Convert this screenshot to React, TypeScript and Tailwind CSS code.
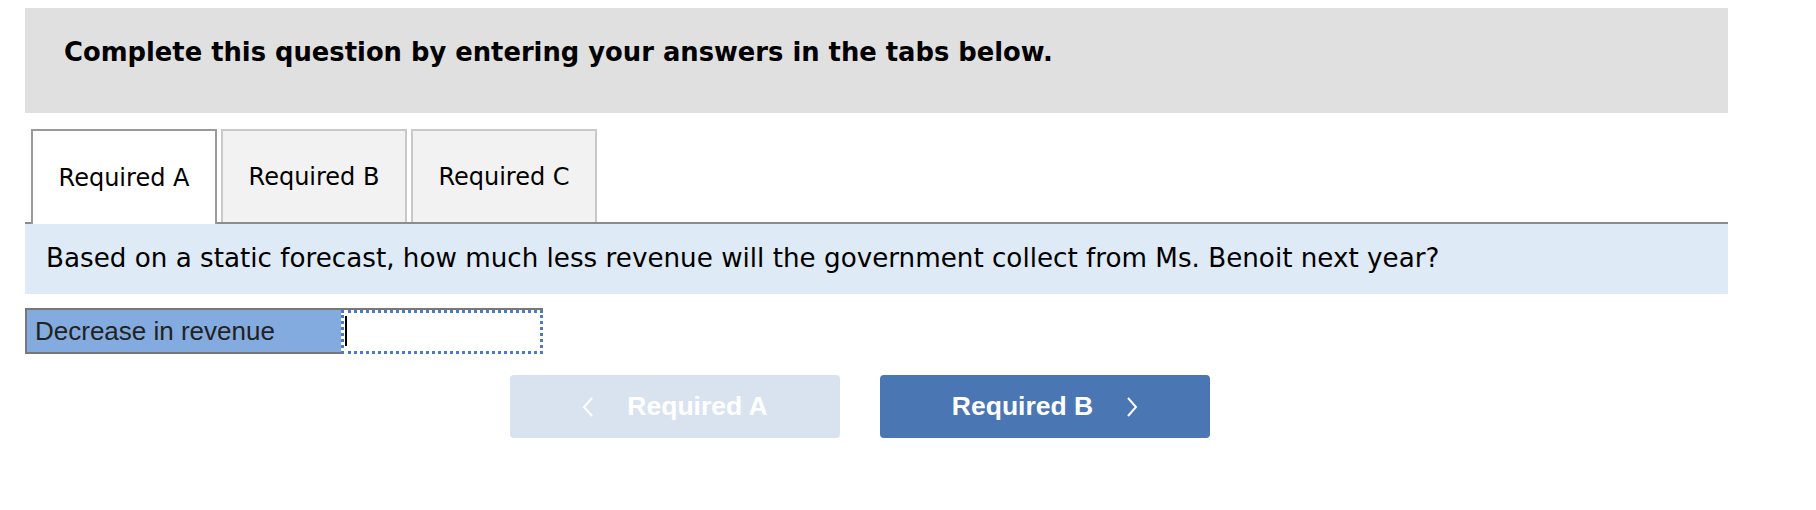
import React from 'react';

const tabs = ['Required A', 'Required B', 'Required C'];

const Chevron = ({ dir }: { dir: 'left' | 'right' }) => (
  <svg width="12" height="22" viewBox="0 0 12 22" fill="none" className="shrink-0">
    <polyline
      points={dir === 'left' ? '10,2 2,11 10,20' : '2,2 10,11 2,20'}
      stroke="white"
      strokeWidth="2"
    />
  </svg>
);

export default function App() {
  return (
    <div className="w-[1816px] h-[510px] bg-white pt-[8px] pl-[25px]">
      <div className="w-[1703px]">
        {/* Instructions */}
        <div className="h-[105px] bg-[#e0e0e0] pl-[39px] pt-[29px]">
          <p className="font-['DejaVu_Sans',Verdana,sans-serif] font-bold text-[25.8px] leading-[30px] text-black">
            Complete this question by entering your answers in the tabs below.
          </p>
        </div>

        {/* Tabs */}
        <div className="mt-[14px] h-[97px] flex items-end gap-[4px] pl-[6px] border-b-2 border-[#8c8c8c]">
          {tabs.map((t, i) =>
            i === 0 ? (
              <div
                key={t}
                className="w-[186px] h-[95px] -mb-[2px] flex items-center justify-center bg-white border-2 border-b-0 border-[#999999] font-['DejaVu_Sans',Verdana,sans-serif] text-[24px] text-black"
              >
                {t}
              </div>
            ) : (
              <div
                key={t}
                className="w-[186px] h-[93px] flex items-center justify-center bg-[#f2f2f2] border-2 border-b-0 border-[#c8c8c8] font-['DejaVu_Sans',Verdana,sans-serif] text-[24px] text-black"
              >
                {t}
              </div>
            )
          )}
        </div>

        {/* Question */}
        <div className="h-[70px] bg-[#dfeaf7] flex items-center pl-[21px]">
          <p className="font-['DejaVu_Sans',Verdana,sans-serif] text-[26.2px] text-black">
            Based on a static forecast, how much less revenue will the government collect from Ms. Benoit next year?
          </p>
        </div>

        {/* Answer row */}
        <div className="mt-[14px] flex w-[518px] h-[46px] border-t-2 border-[#777777]">
          <div className="w-[316px] flex items-center pl-[8px] bg-[#83abdf] border-l-2 border-b-2 border-[#777777] font-['Liberation_Sans',Arial,sans-serif] text-[26px] text-[#222222]">
            Decrease in revenue
          </div>
          <div className="flex-1 relative border-[3px] border-dotted border-[#4a7bc4] bg-white">
            <span className="absolute left-[1px] top-[3px] w-[2px] h-[30px] bg-black" />
          </div>
        </div>

        {/* Navigation */}
        <div className="mt-[21px] ml-[485px] flex gap-[40px]">
          <button className="w-[330px] h-[63px] rounded-[4px] bg-[#d9e3ef] flex items-center justify-center gap-[33px] font-['Liberation_Sans',Arial,sans-serif] font-bold text-[26.5px] text-white">
            <Chevron dir="left" />
            <span>Required A</span>
          </button>
          <button className="w-[330px] h-[63px] rounded-[4px] bg-[#4a76b3] flex items-center justify-center gap-[33px] font-['Liberation_Sans',Arial,sans-serif] font-bold text-[26.5px] text-white">
            <span>Required B</span>
            <Chevron dir="right" />
          </button>
        </div>
      </div>
    </div>
  );
}
